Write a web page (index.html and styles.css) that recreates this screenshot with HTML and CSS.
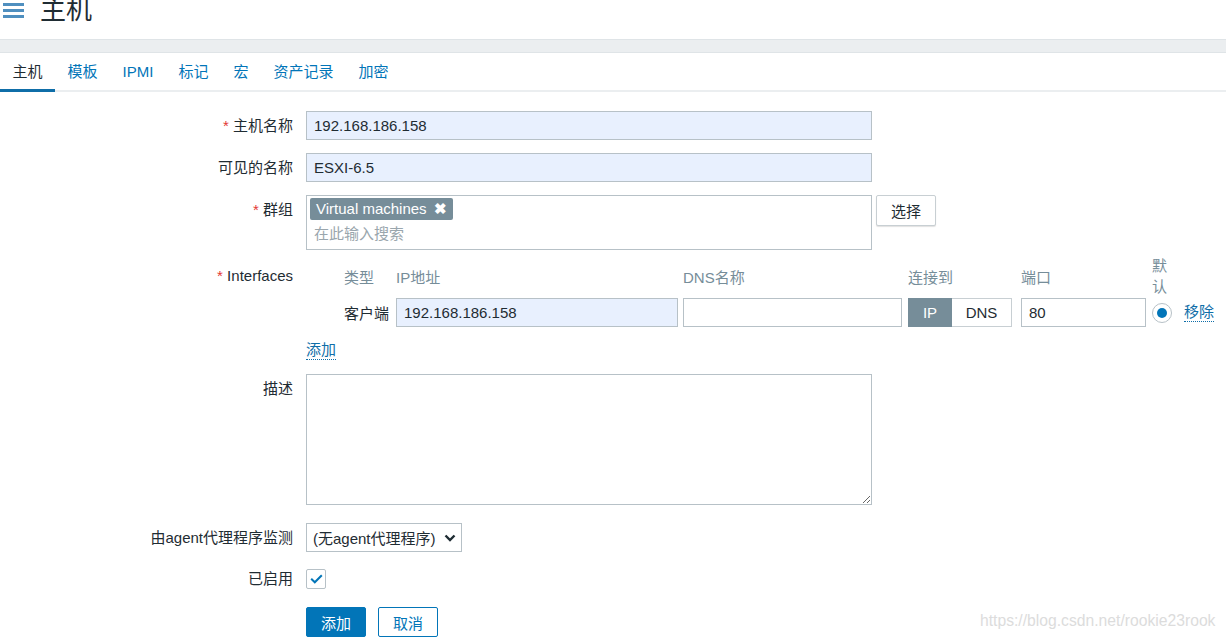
FILE: index.html
```html
<!DOCTYPE html>
<html lang="zh-CN">
<head>
<meta charset="utf-8">
<title>主机</title>
<link rel="stylesheet" href="styles.css">
</head>
<body>
<header class="page-header">
  <button class="menu-toggle" type="button" aria-label="菜单">
    <svg width="22" height="16" viewBox="0 0 22 16"><rect x="0" y="1" width="21" height="3"/><rect x="0" y="7" width="21" height="3"/><rect x="0" y="13" width="21" height="3"/></svg>
  </button>
  <h1 class="page-title">主机</h1>
</header>
<div class="band"></div>
<nav class="tabs">
  <a class="tab active">主机</a>
  <a class="tab">模板</a>
  <a class="tab">IPMI</a>
  <a class="tab">标记</a>
  <a class="tab">宏</a>
  <a class="tab">资产记录</a>
  <a class="tab">加密</a>
</nav>

<form class="form">
  <div class="row">
    <label class="label"><span class="req">*</span> 主机名称</label>
    <div class="field"><input class="input wide autofill" value="192.168.186.158"></div>
  </div>
  <div class="row">
    <label class="label">可见的名称</label>
    <div class="field"><input class="input wide autofill" value="ESXI-6.5"></div>
  </div>
  <div class="row row-groups">
    <label class="label"><span class="req">*</span> 群组</label>
    <div class="field group-field">
      <div class="multiselect">
        <span class="chip">Virtual machines <span class="chip-x">✖</span></span>
        <span class="ms-placeholder">在此输入搜索</span>
      </div>
      <button class="btn-grey" type="button">选择</button>
    </div>
  </div>
  <div class="row row-iface">
    <label class="label label-iface"><span class="req">*</span> Interfaces</label>
    <div class="field">
      <div class="iface">
        <div class="iface-head">
          <span class="c-type">类型</span>
          <span class="c-ip">IP地址</span>
          <span class="c-dns">DNS名称</span>
          <span class="c-conn">连接到</span>
          <span class="c-port">端口</span>
          <span class="c-def">默认</span>
        </div>
        <div class="iface-row">
          <span class="c-type type-name">客户端</span>
          <input class="input c-ip autofill" value="192.168.186.158">
          <input class="input c-dns" value="">
          <div class="c-conn toggle"><span class="seg on">IP</span><span class="seg">DNS</span></div>
          <input class="input c-port" value="80">
          <span class="c-def"><span class="radio"></span></span>
          <a class="link">移除</a>
        </div>
      </div>
      <a class="link add-link">添加</a>
    </div>
  </div>
  <div class="row row-desc">
    <label class="label">描述</label>
    <div class="field"><textarea class="input textarea wide"></textarea></div>
  </div>
  <div class="row row-select">
    <label class="label">由agent代理程序监测</label>
    <div class="field">
      <div class="select">(无agent代理程序)
        <svg class="chev" width="12" height="8" viewBox="0 0 12 8"><path d="M1.5 1.5 L6 6 L10.5 1.5" fill="none" stroke="#1f2c33" stroke-width="2.4"/></svg>
      </div>
    </div>
  </div>
  <div class="row row-check">
    <label class="label label-check">已启用</label>
    <div class="field">
      <span class="checkbox"><svg width="13" height="10" viewBox="0 0 13 10"><path d="M1.2 4.8 L4.8 8.3 L11.8 1.3" fill="none" stroke="#0275b8" stroke-width="2"/></svg></span>
    </div>
  </div>
  <div class="row row-buttons">
    <span class="label"></span>
    <div class="field buttons">
      <button class="btn-primary" type="button">添加</button>
      <button class="btn-alt" type="button">取消</button>
    </div>
  </div>
</form>
<div class="watermark">https://blog.csdn.net/rookie23rook</div>
</body>
</html>
```
FILE: styles.css
```css
* { box-sizing: border-box; }

body {
  margin: 0;
  width: 1226px;
  height: 639px;
  overflow: hidden;
  background: #ffffff;
  color: #1f2c33;
  font-family: "Liberation Sans", Arial, "Noto Sans CJK SC", sans-serif;
  font-size: 15px;
  position: relative;
}

/* header */
.page-header {
  height: 39px;
  display: flex;
  align-items: flex-start;
}
.menu-toggle {
  margin: 2px 0 0 3px;
  padding: 0;
  border: 0;
  background: none;
  width: 22px;
  height: 16px;
}
.menu-toggle svg { display: block; fill: #4f8fbf; }
.page-title {
  margin: -8px 0 0 15px;
  font-size: 26px;
  font-weight: normal;
  line-height: 36px;
  color: #1f2c33;
}

.band {
  height: 14px;
  background: #ebeef0;
  border-top: 1px solid #dfe4e7;
  border-bottom: 1px solid #dfe4e7;
}

/* tabs */
.tabs {
  display: flex;
  height: 39px;
  border-bottom: 2px solid #ebeef0;
}
.tab {
  padding: 0 12.5px;
  line-height: 37px;
  color: #0275b8;
  border-bottom: 3px solid transparent;
  margin-bottom: -2px;
}
.tab.active {
  color: #1f2c33;
  border-bottom-color: #0f6ea8;
}

/* form layout */
.form { padding-top: 19px; }
.row {
  display: grid;
  grid-template-columns: 293px 1fr;
  column-gap: 13px;
  margin-bottom: 13px;
}
.label {
  text-align: right;
  line-height: 29px;
  white-space: nowrap;
}
.req { color: #e33734; }
.field { min-width: 0; }

.input {
  display: block;
  height: 29px;
  border: 1px solid #b7c1c7;
  background: #ffffff;
  padding: 0 7px;
  font: inherit;
  color: #1f2c33;
  border-radius: 0;
  outline: none;
}
.input.autofill { background: #e8f0fe; }
.input.wide { width: 566px; }

/* groups */
.row-groups { margin-bottom: 7px; }
.group-field { display: flex; align-items: flex-start; gap: 4px; }
.multiselect {
  width: 566px;
  height: 55px;
  border: 1px solid #b7c1c7;
  padding: 2px 3px 0 3px;
}
.chip {
  display: inline-block;
  background: #768d99;
  color: #ffffff;
  padding: 0 6px 0 6px;
  height: 22px;
  line-height: 22px;
  border-radius: 2px;
}
.chip-x { font-size: 15px; font-weight: bold; margin-left: 3px; }
.ms-placeholder {
  display: block;
  color: #9aa6ad;
  margin: 4px 0 0 4px;
  line-height: 20px;
}
.btn-grey {
  height: 31px;
  width: 60px;
  background: #ffffff;
  border: 1px solid #c8cfd3;
  border-radius: 2px;
  box-shadow: 0 1px 1px rgba(0,0,0,0.12);
  font: inherit;
  color: #1f2c33;
  padding: 0;
}

/* interfaces */
.row-iface { margin-bottom: 0; }
.row .label-iface { line-height: 38px; }
.iface { width: 910px; }
.iface-head, .iface-row { display: flex; align-items: center; }
.iface-head {
  height: 38px;
  color: #768d99;
  margin-bottom: 3px;
}
.iface-head .c-type { margin-left: 38px; margin-right: 14px; width: 38px; }
.iface-row .c-type { margin-left: 38px; margin-right: 7px; }
.type-name { color: #1f2c33; white-space: nowrap; width: 45px; }
.iface-row .c-ip { width: 282px; margin-right: 5px; }
.iface-head .c-ip { width: 287px; }
.iface-row .c-dns { width: 219px; margin-right: 6px; }
.iface-head .c-dns { width: 225px; }
.iface-row .c-conn { width: 104px; margin-right: 9px; }
.iface-head .c-conn { width: 113px; }
.iface-row .c-port { width: 125px; margin-right: 6px; }
.iface-head .c-port { width: 131px; }
.c-def { width: 20px; margin-right: 12px; line-height: 21px; }

.toggle {
  display: flex;
  height: 29px;
}
.seg {
  line-height: 27px;
  text-align: center;
  border: 1px solid #c8cfd3;
  background: #ffffff;
  color: #1f2c33;
}
.seg.on {
  width: 44px;
  background: #768d99;
  border-color: #768d99;
  color: #ffffff;
}
.seg:last-child { flex: 1; border-left: 0; }

.radio {
  display: block;
  width: 20px;
  height: 20px;
  border: 1px solid #b7c1c7;
  border-radius: 50%;
  position: relative;
  background: #fff;
}
.radio::after {
  content: "";
  position: absolute;
  left: 4px;
  top: 4px;
  width: 10px;
  height: 10px;
  border-radius: 50%;
  background: #0275b8;
}

.link {
  color: #0f6ea8;
  border-bottom: 1px dotted #0f6ea8;
  line-height: 18px;
}
.add-link {
  display: inline-block;
  margin-top: 14px;
  margin-bottom: 14px;
}

/* description */
.row-desc { margin-bottom: 18px; }
.textarea {
  height: 131px;
  resize: both;
  padding: 6px 7px;
}

/* proxy select */
.row-select { margin-bottom: 17px; }
.select {
  display: inline-flex;
  align-items: center;
  height: 29px;
  width: 156px;
  border: 1px solid #b7c1c7;
  padding: 0 0 0 6px;
  white-space: nowrap;
}
.chev { margin-left: 8px; }

/* enabled */
.row-check { margin-bottom: 18px; }
.row .label-check { line-height: 20px; }
.checkbox {
  display: flex;
  align-items: center;
  justify-content: center;
  width: 20px;
  height: 20px;
  border: 1px solid #b7c1c7;
  border-radius: 2px;
}

.buttons { display: flex; gap: 12px; }
.btn-primary, .btn-alt {
  width: 60px;
  height: 30px;
  border-radius: 2px;
  font: inherit;
  padding: 0;
}
.btn-primary {
  background: #0275b8;
  border: 1px solid #0275b8;
  color: #ffffff;
}
.btn-alt {
  background: #ffffff;
  border: 1px solid #0275b8;
  color: #0275b8;
}

.watermark {
  position: absolute;
  left: 980px;
  top: 612px;
  font-size: 15.7px;
  color: #dcdcdc;
}
```
